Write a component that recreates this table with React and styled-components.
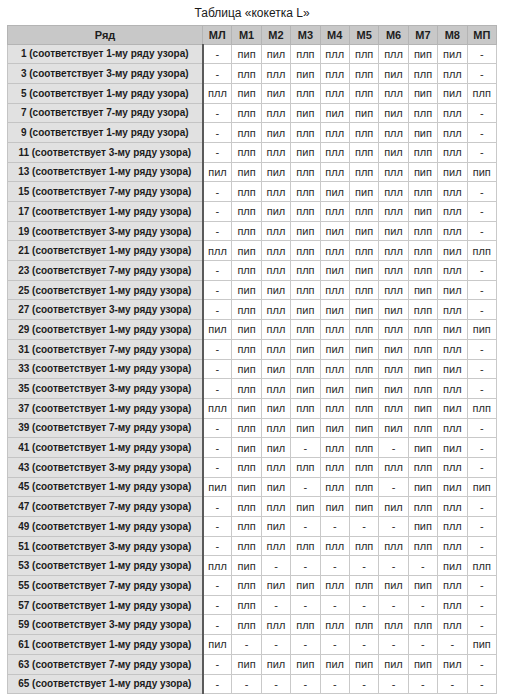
import React from "react";
import styled, { createGlobalStyle } from "styled-components";

const GlobalStyle = createGlobalStyle`
  body {
    margin: 0;
    background: #ffffff;
    font-family: "Liberation Sans", Arial, sans-serif;
    color: #111111;
  }
`;

const Page = styled.div`
  width: 507px;
  padding: 6px 0 0 7px;
  box-sizing: border-box;
`;

const Title = styled.div`
  width: 490px;
  text-align: center;
  font-size: 12px;
  line-height: 15px;
  height: 19px;
  color: #1a1a1a;
`;

const Table = styled.table`
  border-collapse: collapse;
  table-layout: fixed;
  width: 490px;
  font-size: 11px;
`;

const HeadRow = styled.tr`
  height: 18.5px;
`;

const HeadCell = styled.th`
  padding: 0;
  background: #c8c8c8;
  border: 1px solid #b4b4b4;
  font-weight: bold;
  font-size: 11px;
  color: #1e1e1e;
  text-align: center;
  width: ${(p) => (p.$wide ? "194px" : "auto")};
`;

const Row = styled.tr`
  height: 19.7px;
`;

const LabelCell = styled.td`
  padding: 0;
  background: #e1e1e1;
  border: 1px solid #c4c4c4;
  border-right: 2px solid #5a5a5a;
  font-weight: bold;
  font-size: 10px;
  text-align: center;
  color: #1c1c1c;
  white-space: nowrap;
`;

const Cell = styled.td`
  padding: 0;
  background: #ffffff;
  border: 1px solid #c9c9c9;
  text-align: center;
  font-size: 11px;
  color: #2a2a2a;
  white-space: nowrap;
`;

const columns = ["МЛ", "М1", "М2", "М3", "М4", "М5", "М6", "М7", "М8", "МП"];

const rows = [
  [1, 1, "- пип пил плп плл плп плл пип пил -"],
  [3, 3, "- плп плл пип плл плп пил плп плл -"],
  [5, 1, "плл пип пил плп плл плп плл пип пил плп"],
  [7, 7, "- плп плл пип пил пип пил плп плл -"],
  [9, 1, "- плп пил плп плл плп плл пип плл -"],
  [11, 3, "- плп плл пип плл плп пил плп плл -"],
  [13, 1, "пил пип пил плп плл плп плл пип пил пип"],
  [15, 7, "- плп плл плп пил пип плл плп плл -"],
  [17, 1, "- плп пил плп плл плп плл пип плл -"],
  [19, 3, "- плп плл пип пил пип пил плп плл -"],
  [21, 1, "плл пип плл плп плл плп плл плп пил плп"],
  [23, 7, "- плп плл плп пил пип плл плп плл -"],
  [25, 1, "- пип пил плп плл плп плл пип пил -"],
  [27, 3, "- плп плл пип пил пип пил плп плл -"],
  [29, 1, "пил пип плл плп плл плп плл плп пил пип"],
  [31, 7, "- плп плл пип пил пип пил плп плл -"],
  [33, 1, "- пип пил плп плл плп плл пип пил -"],
  [35, 3, "- плп плл пип пил пип пил плп плл -"],
  [37, 1, "плл пип пил плп плл плп плл пип пил плп"],
  [39, 7, "- плп плл пип пил пип пил плп плл -"],
  [41, 1, "- пип пил - плл плп - пип пил -"],
  [43, 3, "- плп плл плп плл плп плл плп плл -"],
  [45, 1, "пил пип пил - плл плп - пип пил пип"],
  [47, 7, "- плп плл пип пил пип пил плп плл -"],
  [49, 1, "- плп пил - - - - пип плл -"],
  [51, 3, "- плп плл плп плл плп плл плп плл -"],
  [53, 1, "плл пип - - - - - - пил плп"],
  [55, 7, "- плп пил пип плл плп пил пип плл -"],
  [57, 1, "- плп - - - - - - плл -"],
  [59, 3, "- плп плл плп плл плп плл плп плл -"],
  [61, 1, "пил - - - - - - - - пип"],
  [63, 7, "- пип пил пип пил пип пил пип пил -"],
  [65, 1, "- - - - - - - - - -"],
];

export default function App() {
  return (
    <Page>
      <GlobalStyle />
      <Title>Таблица «кокетка L»</Title>
      <Table>
        <thead>
          <HeadRow>
            <HeadCell $wide>Ряд</HeadCell>
            {columns.map((c) => (
              <HeadCell key={c}>{c}</HeadCell>
            ))}
          </HeadRow>
        </thead>
        <tbody>
          {rows.map(([n, p, cells]) => (
            <Row key={n}>
              <LabelCell>
                {n} (соответствует {p}-му ряду узора)
              </LabelCell>
              {cells.split(" ").map((v, i) => (
                <Cell key={i}>{v}</Cell>
              ))}
            </Row>
          ))}
        </tbody>
      </Table>
    </Page>
  );
}
